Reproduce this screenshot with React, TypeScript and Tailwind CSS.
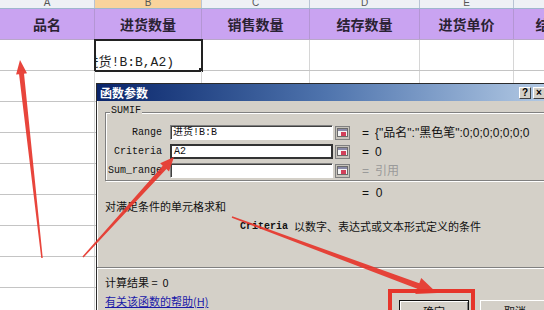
import React from "react";

const CJK = "font-['Noto_Sans_CJK_SC',sans-serif]";
const MONO = "font-['Liberation_Mono','Noto_Sans_CJK_SC',monospace]";

const COLS = [
  { letter: "A", width: "w-[95px]", title: "品名", selected: false },
  { letter: "B", width: "w-[107px]", title: "进货数量", selected: true },
  { letter: "C", width: "w-[108px]", title: "销售数量", selected: false },
  { letter: "D", width: "w-[110px]", title: "结存数量", selected: false },
  { letter: "E", width: "w-[94px]", title: "进货单价", selected: false },
  { letter: "F", width: "w-[100px]", title: "结存金额", selected: false },
];

const ROWS = 9;

type Arrow = {
  from: [number, number];
  to: [number, number];
  tail: number;
  shaft: number;
  headL: number;
  headW: number;
};

const ARROWS: Arrow[] = [
  { from: [42, 258], to: [20, 60], tail: 1.5, shaft: 5, headL: 14, headW: 11 },
  { from: [83, 257], to: [174, 157], tail: 1.5, shaft: 5, headL: 14, headW: 12 },
  { from: [232, 217], to: [437, 293], tail: 1.5, shaft: 6, headL: 20, headW: 17 },
];

function arrowPoints(a: Arrow) {
  const [x1, y1] = a.from;
  const [x2, y2] = a.to;
  const len = Math.hypot(x2 - x1, y2 - y1);
  const ux = (x2 - x1) / len;
  const uy = (y2 - y1) / len;
  const nx = -uy;
  const ny = ux;
  const bx = x2 - ux * a.headL;
  const by = y2 - uy * a.headL;
  const p = (x: number, y: number, w: number) => `${x + nx * w},${y + ny * w}`;
  return [
    p(x1, y1, a.tail / 2),
    p(bx, by, a.shaft / 2),
    p(bx, by, a.headW / 2),
    `${x2},${y2}`,
    p(bx, by, -a.headW / 2),
    p(bx, by, -a.shaft / 2),
    p(x1, y1, -a.tail / 2),
  ].join(" ");
}

function Sheet() {
  return (
    <div className="flex flex-col">
      {/* column letters */}
      <div className="flex h-[9px] overflow-hidden border-b border-[#9eb6ce] bg-[#eef1f5]">
        {COLS.map((c) => (
          <div
            key={c.letter}
            className={`${c.width} shrink-0 border-r border-[#b8c4d4] flex justify-center text-[10px] leading-[6px] text-[#555] font-['Liberation_Sans',sans-serif] ${
              c.selected ? "bg-[#f9d39c]" : ""
            }`}
          >
            {c.letter}
          </div>
        ))}
      </div>
      {/* header row */}
      <div className="flex h-[31px] bg-[#c9a3f1] border-b border-[#b9a7c9]">
        {COLS.map((c) => (
          <div
            key={c.letter}
            className={`${c.width} shrink-0 border-r border-[#b496d4] flex items-center justify-center text-[14px] font-bold text-[#2a2233] ${CJK}`}
          >
            {c.title}
          </div>
        ))}
      </div>
      {Array.from({ length: ROWS }).map((_, r) => (
        <div key={r} className="flex h-[31px] border-b border-[#c4c4c4]">
          {COLS.map((c) => (
            <div key={c.letter} className={`${c.width} shrink-0 border-r border-[#d6d6d6] relative`}>
              {r === 0 && c.selected && (
                <div className="absolute -left-px -top-px w-[109px] h-[33px] border-2 border-[#222] flex items-end justify-end overflow-hidden pr-[27px]">
                  <span className={`whitespace-nowrap text-[13px] leading-[16px] mb-[-1px] text-[#222] ${MONO}`}>
                    =SUMIF(进货!B:B,A2)
                  </span>
                  <div className="absolute right-[-3px] bottom-[-3px] w-[5px] h-[5px] bg-[#222]" />
                </div>
              )}
            </div>
          ))}
        </div>
      ))}
    </div>
  );
}

function RefIcon() {
  return (
    <div className="ml-[2px] w-[15px] h-[14px] shrink-0 border border-[#808080] bg-[#c8c4bc] flex items-center justify-center">
      <svg width="11" height="9" viewBox="0 0 11 9">
        <rect x="0.5" y="0.5" width="10" height="8" fill="#f4f4f4" stroke="#6b6b6b" />
        <rect x="1" y="1" width="9" height="2" fill="#8a8aa8" />
        <rect x="4" y="4" width="5" height="4" fill="#d2405a" />
      </svg>
    </div>
  );
}

function ArgRow({
  label,
  value,
  focused,
  muted,
}: {
  label: string;
  value: string;
  focused?: boolean;
  muted?: boolean;
}) {
  return (
    <div className="flex items-center h-[15px]">
      <div className={`w-[56px] text-right text-[10px] text-[#111] ${MONO}`}>{label}</div>
      <div
        className={`ml-[8px] w-[163px] h-[15px] bg-white flex items-center pl-[2px] text-[10px] text-[#111] ${MONO} ${
          focused
            ? "border-2 border-[#333]"
            : "border border-t-[#808080] border-l-[#808080] border-b-[#fff] border-r-[#fff] shadow-[inset_1px_1px_0_#404040]"
        }`}
      >
        {label === "Range" ? "进货!B:B" : label === "Criteria" ? "A2" : ""}
      </div>
      <RefIcon />
      <div className={`ml-[12px] text-[12px] ${muted ? "text-[#9a9a9a]" : "text-[#111]"} font-['Liberation_Sans',sans-serif]`}>
        =
      </div>
      <div
        className={`ml-[6px] whitespace-nowrap text-[12px] ${muted ? "text-[#9a9a9a]" : "text-[#111]"} font-['Liberation_Sans','Noto_Sans_CJK_SC',sans-serif]`}
      >
        {value}
      </div>
    </div>
  );
}

function Dialog() {
  return (
    <div className="absolute left-[96px] top-[83px] w-[460px] h-[240px] bg-[#d4d0c8] border border-[#2b2b2b] shadow-[inset_1px_1px_0_#fff]">
      {/* title bar */}
      <div className="h-[17px] flex items-center justify-between bg-gradient-to-r from-[#0a246a] via-[#4f74ad] to-[#b7cde6] pl-[3px] pr-[10px]">
        <span className={`text-[12px] font-bold text-white leading-none ${CJK}`}>函数参数</span>
        <div className="flex gap-[2px]">
          <div className="w-[12px] h-[12px] bg-[#d4d0c8] border border-t-white border-l-white border-b-[#404040] border-r-[#404040] flex items-center justify-center text-[10px] font-bold leading-none font-['Liberation_Sans',sans-serif]">
            ?
          </div>
          <div className="w-[12px] h-[12px] bg-[#d4d0c8] border border-t-white border-l-white border-b-[#404040] border-r-[#404040] flex items-center justify-center text-[10px] font-bold leading-none font-['Liberation_Sans',sans-serif]">
            ×
          </div>
        </div>
      </div>

      <div className="px-[8px]">
        {/* SUMIF group */}
        <div className="relative mt-[11px] border border-[#808080] shadow-[1px_1px_0_#fff,inset_1px_1px_0_#fff] pt-[12px] pb-[2px] flex flex-col gap-[4px]">
          <span className={`absolute -top-[8px] left-[4px] bg-[#d4d0c8] px-[1px] text-[10px] leading-[12px] text-[#111] ${MONO}`}>
            SUMIF
          </span>
          <ArgRow label="Range" value={'{"品名":"黑色笔":0;0;0;0;0;0;0'} />
          <ArgRow label="Criteria" value="0" focused />
          <ArgRow label="Sum_range" value="引用" muted />
        </div>

        <div className="mt-[5px] pl-[257px] h-[13px] flex items-center text-[12px] text-[#111] font-['Liberation_Sans',sans-serif] whitespace-nowrap">
          =&nbsp;&nbsp;0
        </div>

        <div className={`mt-[0px] text-[11px] leading-[14px] text-[#111] ${CJK}`}>对满足条件的单元格求和</div>

        <div className="mt-[6px] pl-[135px] flex items-center whitespace-nowrap h-[14px]">
          <span className={`text-[10px] font-bold text-[#111] ${MONO}`}>Criteria</span>
          <span className={`ml-[6px] text-[11px] text-[#111] ${CJK}`}>以数字、表达式或文本形式定义的条件</span>
        </div>

        <div className="mt-[34px] h-[2px] border-t border-[#808080] border-b border-b-white -mx-[8px]" />

        <div className="flex">
          <div className="w-[294px] shrink-0 flex flex-col">
            <div className={`mt-[6px] text-[11px] leading-[14px] text-[#111] ${CJK}`}>计算结果 =&nbsp;&nbsp;0</div>
            <div className={`mt-[5px] text-[11px] leading-[14px] text-[#1a1aa8] underline ${CJK}`}>
              有关该函数的帮助(H)
            </div>
          </div>
          <div className="flex gap-[11px] mt-[31px]">
            <div className={`w-[70px] h-[22px] bg-[#d4d0c8] border border-[#111] shadow-[inset_1px_1px_0_#fff,inset_-1px_-1px_0_#808080] flex justify-center pt-[2px] text-[11px] text-[#111] ${CJK}`}>
              确定
            </div>
            <div className={`w-[70px] h-[22px] bg-[#d4d0c8] border border-t-white border-l-white border-b-[#404040] border-r-[#404040] flex justify-center pt-[2px] text-[11px] text-[#111] ${CJK}`}>
              取消
            </div>
          </div>
        </div>
      </div>
    </div>
  );
}

export default function App() {
  return (
    <div className="relative w-[544px] h-[310px] overflow-hidden bg-white">
      <Sheet />
      <Dialog />
      <svg className="absolute inset-0 pointer-events-none" width="544" height="310">
        {ARROWS.map((a, i) => (
          <polygon key={i} points={arrowPoints(a)} fill="#e6352b" fillOpacity={0.92} />
        ))}
        <rect x="390" y="291" width="83" height="30" fill="none" stroke="#e6352b" strokeWidth="4" />
      </svg>
    </div>
  );
}
